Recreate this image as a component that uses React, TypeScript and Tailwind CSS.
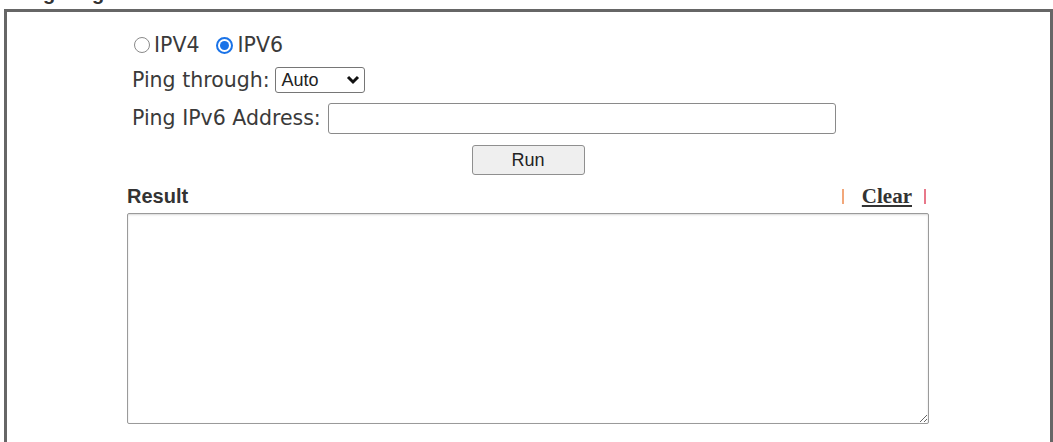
import { useState } from "react";

const label = "font-['DejaVu_Sans',sans-serif] text-[20.5px] text-[#3a3a3a]";

function Radio({ checked, text, onClick }: { checked: boolean; text: string; onClick: () => void }) {
  return (
    <button onClick={onClick} className="flex items-center h-[22px] cursor-pointer">
      {checked ? (
        <span className="shrink-0 w-[17px] h-[17px] rounded-full border-2 border-[#1a73e8] bg-white flex items-center justify-center">
          <span className="w-[9px] h-[9px] rounded-full bg-[#1a73e8]" />
        </span>
      ) : (
        <span className="shrink-0 w-[16px] h-[16px] rounded-full border border-[#8a8a8a] bg-white" />
      )}
      <span className={`${label} ml-[4px] leading-[22px]`}>{text}</span>
    </button>
  );
}

export default function App() {
  const [ipv, setIpv] = useState<"4" | "6">("6");
  const [result, setResult] = useState("");

  return (
    <div className="w-[1053px] h-[442px] overflow-hidden bg-white">
      {/* panel title, mostly scrolled out of view */}
      <div className="pl-[12px] -mt-[18px] h-[23px] font-['Liberation_Sans',Arial,sans-serif] font-bold text-[20px] leading-[23px] text-[#333]">
        Ping Diagnosis
      </div>

      <div className="ml-[4px] mt-[4px] w-[1049px] h-[440px] border-[3px] border-b-0 border-[#666]">
        <div className="ml-[120px] w-[802px] pt-[22px] flex flex-col">
          <div className="ml-[7px] flex items-center gap-[17px]">
            <Radio checked={ipv === "4"} text="IPV4" onClick={() => setIpv("4")} />
            <Radio checked={ipv === "6"} text="IPV6" onClick={() => setIpv("6")} />
          </div>

          <div className="ml-[5px] mt-[11px] h-[26px] flex items-center">
            <span className={label}>Ping through:</span>
            <div className="ml-[5px] w-[90px] h-[26px] border border-[#767676] rounded-[3px] bg-white flex items-center justify-between pl-[6px] pr-[4px]">
              <span className="font-['Liberation_Sans',Arial,sans-serif] text-[18px] text-[#222]">Auto</span>
              <svg width="14" height="10" viewBox="0 0 14 10">
                <polyline points="2,2 7,7 12,2" fill="none" stroke="#111" strokeWidth="3" />
              </svg>
            </div>
          </div>

          <div className="ml-[5px] mt-[10px] h-[31px] flex items-center">
            <span className={label}>{ipv === "6" ? "Ping IPv6 Address:" : "Ping IPv4 Address:"}</span>
            <input className="ml-[7px] w-[508px] h-[31px] border border-[#8a8a8a] rounded-[3px] px-[4px] outline-none" />
          </div>

          <div className="mt-[11px] flex justify-center">
            <button
              onClick={() => setResult("")}
              className="w-[113px] h-[30px] bg-[#efefef] border border-[#8f8f8f] rounded-[3px] font-['Liberation_Sans',Arial,sans-serif] text-[18px] text-[#222]"
            >
              Run
            </button>
          </div>

          <div className="mt-[10px] h-[22px] flex items-center justify-between">
            <span className="font-['Liberation_Sans',Arial,sans-serif] font-bold text-[20px] text-[#333]">Result</span>
            <div className="flex items-center font-['Liberation_Serif',serif] font-bold text-[21px]">
              <span className="w-[2px] h-[15px] bg-[#f2a77a]" />
              <button onClick={() => setResult("")} className="ml-[18px] underline text-[#333] leading-[22px]">
                Clear
              </button>
              <span className="ml-[12px] mr-[3px] w-[2px] h-[15px] bg-[#e8788a]" />
            </div>
          </div>

          <textarea
            value={result}
            onChange={(e) => setResult(e.target.value)}
            className="mt-[6px] w-[802px] h-[211px] border border-[#9a9a9a] rounded-[2px] shadow-[inset_0_1px_2px_rgba(0,0,0,0.15)] outline-none"
          />
        </div>
      </div>
    </div>
  );
}
